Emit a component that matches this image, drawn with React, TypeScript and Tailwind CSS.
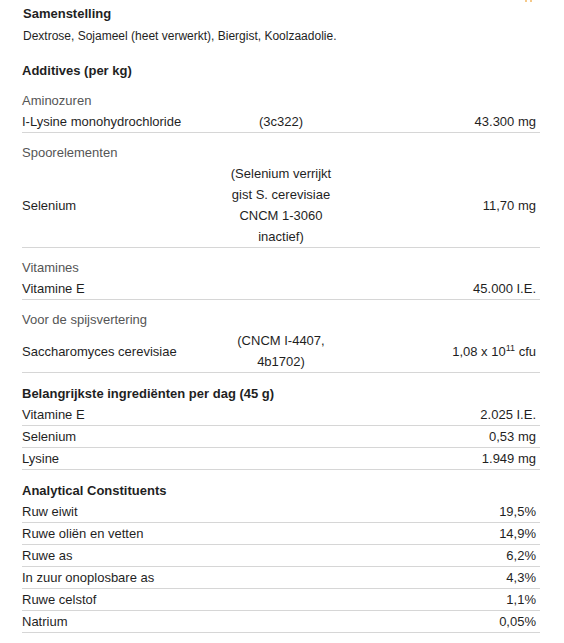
import React from 'react';

type Row = { name: string; code?: React.ReactNode; value: React.ReactNode };

const groups: { label: string; rows: Row[] }[] = [
  { label: 'Aminozuren', rows: [{ name: 'I-Lysine monohydrochloride', code: '(3c322)', value: '43.300 mg' }] },
  {
    label: 'Spoorelementen',
    rows: [{ name: 'Selenium', code: '(Selenium verrijkt gist S. cerevisiae CNCM 1-3060 inactief)', value: '11,70 mg' }],
  },
  { label: 'Vitamines', rows: [{ name: 'Vitamine E', value: '45.000 I.E.' }] },
  {
    label: 'Voor de spijsvertering',
    rows: [
      {
        name: 'Saccharomyces cerevisiae',
        code: '(CNCM I-4407, 4b1702)',
        value: (
          <>
            1,08 x 10<sup className="text-[9px]">11</sup> cfu
          </>
        ),
      },
    ],
  },
];

const perDay = [
  ['Vitamine E', '2.025 I.E.'],
  ['Selenium', '0,53 mg'],
  ['Lysine', '1.949 mg'],
];

const analytical = [
  ['Ruw eiwit', '19,5%'],
  ['Ruwe oliën en vetten', '14,9%'],
  ['Ruwe as', '6,2%'],
  ['In zuur onoplosbare as', '4,3%'],
  ['Ruwe celstof', '1,1%'],
  ['Natrium', '0,05%'],
];

const SimpleTable = ({ title, rows }: { title: string; rows: string[][] }) => (
  <div className="pt-[10px]">
    <div className="font-bold">{title}</div>
    {rows.map(([k, v]) => (
      <div key={k} className="flex justify-between border-b border-[#d6d6d6]">
        <span>{k}</span>
        <span className="pr-[4px]">{v}</span>
      </div>
    ))}
  </div>
);

export default function App() {
  return (
    <div
      className="relative w-[564px] h-[643px] bg-white text-[#1f1f1f] text-[13px] leading-[21px] pl-[22px] pt-[3px] overflow-hidden"
      style={{ fontFamily: '"Liberation Sans", Arial, sans-serif' }}
    >
      {/* bottom edge of something cut off above */}
      <span className="absolute top-0 left-[525px] w-[2px] h-[2px] bg-[#f5c98a]" />
      <span className="absolute top-0 left-[530px] w-[2px] h-[2px] bg-[#f5c98a]" />

      <div className="w-[518px]">
        <div className="pl-[1px]">
          <div className="font-bold">Samenstelling</div>
          <div className="mt-[2px] text-[12px]">Dextrose, Sojameel (heet verwerkt), Biergist, Koolzaadolie.</div>
        </div>

        <div className="mt-[13px] font-bold">Additives (per kg)</div>

        {groups.map((g) => (
          <div key={g.label} className="pt-[9px] border-b border-[#d6d6d6]">
            <div className="text-[#555]">{g.label}</div>
            {g.rows.map((r) => (
              <div key={r.name} className="grid grid-cols-[1fr_110px_1fr] items-center">
                <span>{r.name}</span>
                <span className="text-center">{r.code}</span>
                <span className="text-right pr-[4px]">{r.value}</span>
              </div>
            ))}
          </div>
        ))}

        <SimpleTable title="Belangrijkste ingrediënten per dag (45 g)" rows={perDay} />
        <SimpleTable title="Analytical Constituents" rows={analytical} />
      </div>
    </div>
  );
}
